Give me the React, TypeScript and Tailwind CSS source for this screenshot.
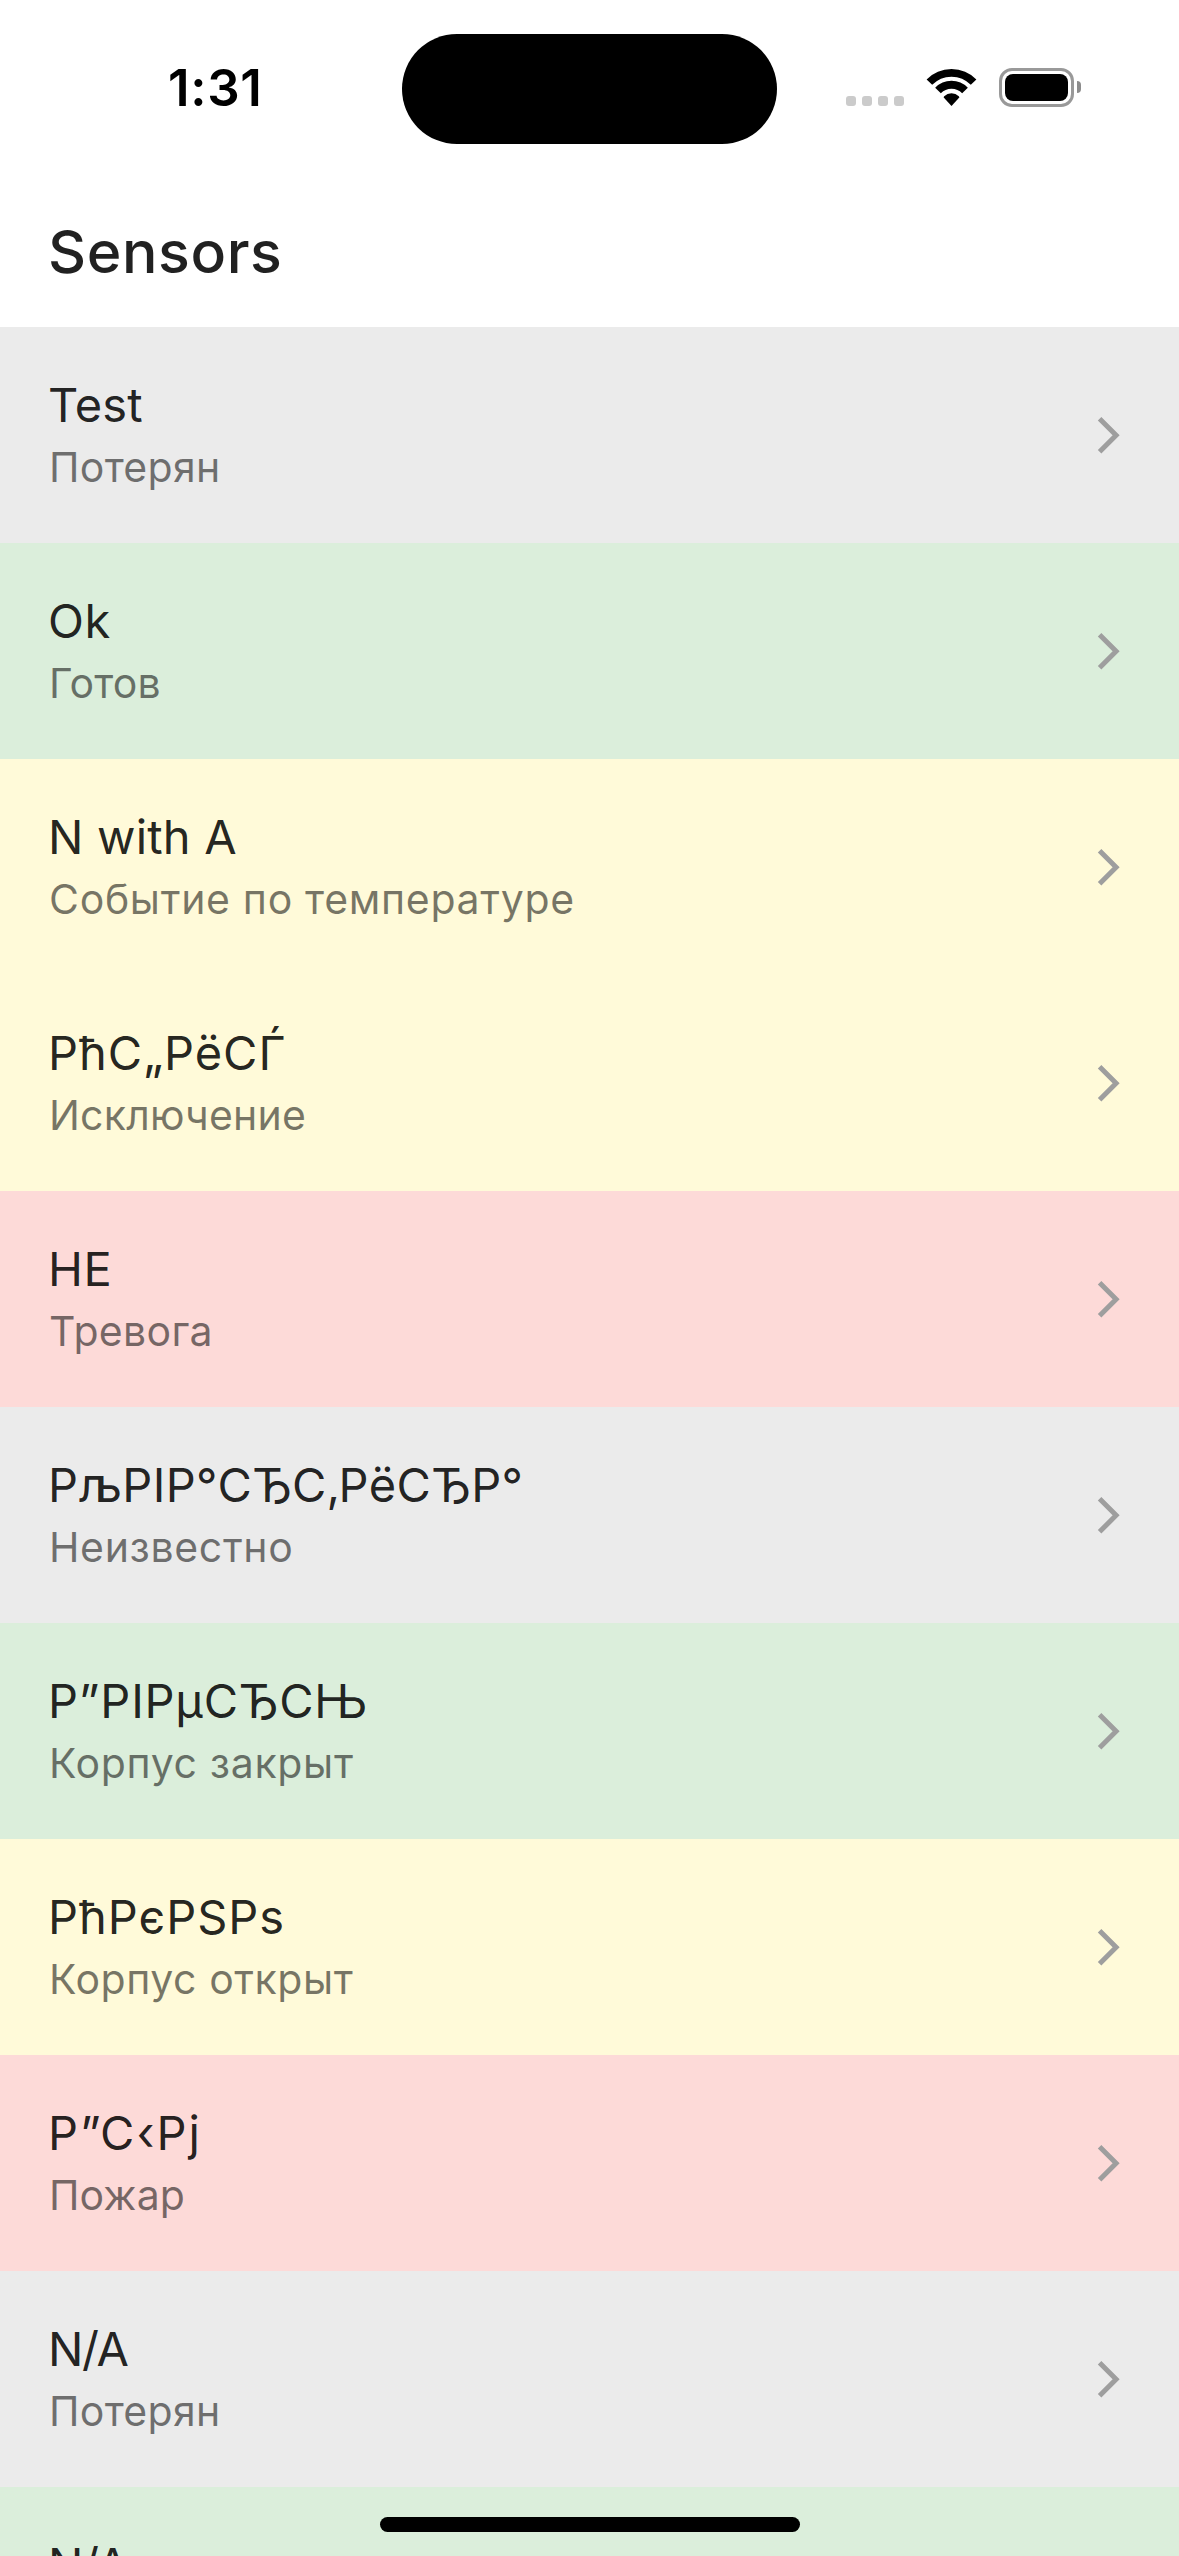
type Status = "lost" | "ok" | "warning" | "alarm";

type Sensor = { name: string; state: string; status: Status; nameTracking?: string; stateTracking?: string };

const background: Record<Status, string> = {
  lost: "bg-[#ebebeb]",
  ok: "bg-[#dbeedb]",
  warning: "bg-[#fffad9]",
  alarm: "bg-[#fddad8]",
};

const sensors: Sensor[] = [
  { name: "Test", state: "Потерян", status: "lost", nameTracking: "tracking-[0.1px]", stateTracking: "tracking-[0.3px]" },
  { name: "Ok", state: "Готов", status: "ok", stateTracking: "tracking-[0.1px]" },
  { name: "N with A", state: "Событие по температуре", status: "warning", nameTracking: "tracking-[0.2px]", stateTracking: "tracking-[0.68px]" },
  { name: "Р\u045BС\u201EР\u0451С\u0403", state: "Исключение", status: "warning", nameTracking: "tracking-[1px]", stateTracking: "tracking-[0.2px]" },
  { name: "НЕ", state: "Тревога", status: "alarm", stateTracking: "tracking-[0.3px]" },
  { name: "Р\u0459Р\u0406Р°С\u0402С\u201AР\u0451С\u0402Р°", state: "Неизвестно", status: "lost", nameTracking: "tracking-[0.4px]", stateTracking: "tracking-[0.65px]" },
  { name: "Р\u201DР\u0406РµС\u0402С\u040A", state: "Корпус закрыт", status: "ok", nameTracking: "tracking-[0.8px]", stateTracking: "tracking-[0.65px]" },
  { name: "Р\u045BР\u0454Р\u0405Р\u0455", state: "Корпус открыт", status: "warning", nameTracking: "tracking-[1px]", stateTracking: "tracking-[0.55px]" },
  { name: "Р\u201DС\u2039Р\u0458", state: "Пожар", status: "alarm", nameTracking: "tracking-[2px]", stateTracking: "tracking-[0.1px]" },
  { name: "N/A", state: "Потерян", status: "lost", nameTracking: "tracking-[-1.4px]", stateTracking: "tracking-[0.3px]" },
  { name: "N/A", state: "Готов", status: "ok", nameTracking: "tracking-[-1.4px]", stateTracking: "tracking-[0.1px]" },
];

function StatusBar() {
  return (
    <div className="flex h-[177px] shrink-0 items-start">
      <div className="w-[402px] pt-[58px] pl-[168px] text-[51px] leading-[60px] font-semibold tracking-[0.7px] text-black">
        1:31
      </div>
      <div className="mt-[34px] h-[110px] w-[375px] rounded-full bg-black" />
      <div className="mt-[68px] ml-[69px] flex h-[39px] items-end">
        <div className="mb-px flex gap-[6px]">
          {[0, 1, 2, 3].map((dot) => (
            <span key={dot} className="size-[10px] rounded-[3px] bg-[#cbcbcb]" />
          ))}
        </div>
        <svg className="ml-[22px] h-[39px] w-[51px]" viewBox="0 0 51 39" fill="none">
          <path d="M3.4 14.2 A30.7 30.7 0 0 1 47.6 14.2" stroke="#000" strokeWidth="7.7" />
          <path d="M12 22.4 A18.8 18.8 0 0 1 39 22.4" stroke="#000" strokeWidth="7.9" />
          <path d="M17.7 29.6 Q17.6 28.8 18.2 28.2 A10.5 10.5 0 0 1 32.8 28.2 Q33.4 28.8 33.3 29.6 L25.5 38 Z" fill="#000" />
        </svg>
        <div className="ml-[22px] h-[39px] w-[75px] rounded-[13px] border-[3px] border-[#999] p-[3px]">
          <div className="h-[27px] w-[63px] rounded-[8px] bg-black" />
        </div>
        <div className="mb-[14px] ml-[3px] h-[12px] w-[4px] rounded-r-full bg-[#8c8c8c]" />
      </div>
    </div>
  );
}

function SensorRow({ name, state, status, nameTracking = "tracking-[0.6px]", stateTracking = "tracking-[0.6px]" }: Sensor) {
  return (
    <li className={`flex h-[216px] shrink-0 items-center justify-between pr-[57px] pl-12 ${background[status]}`}>
      <div className="h-full pt-12">
        <p className={`text-[47px] leading-[60px] text-black/87 ${nameTracking}`}>{name}</p>
        <p className={`mt-[2px] pl-px text-[41px] leading-[60px] text-black/54 ${stateTracking}`}>{state}</p>
      </div>
      <svg className="h-[40px] w-[26px]" viewBox="0 0 26 40" fill="none">
        <path d="M3.6 3.8 L20.1 20.3 L3.6 36.8" stroke="#9e9e9e" strokeWidth="5" />
      </svg>
    </li>
  );
}

export default function App() {
  return (
    <div className="relative flex h-[2556px] w-[1179px] flex-col overflow-hidden bg-white font-['Inter',sans-serif]">
      <StatusBar />
      <header className="h-[150px] shrink-0 pt-[35px] pl-12">
        <h1 className="text-[59px] leading-[80px] font-medium tracking-[0.6px] text-black/87">Sensors</h1>
      </header>
      <ul className="flex flex-col">
        {sensors.map((sensor, index) => (
          <SensorRow key={index} {...sensor} />
        ))}
      </ul>
      <div className="absolute top-[2517px] left-[380px] h-[15px] w-[420px] rounded-full bg-black" />
    </div>
  );
}
